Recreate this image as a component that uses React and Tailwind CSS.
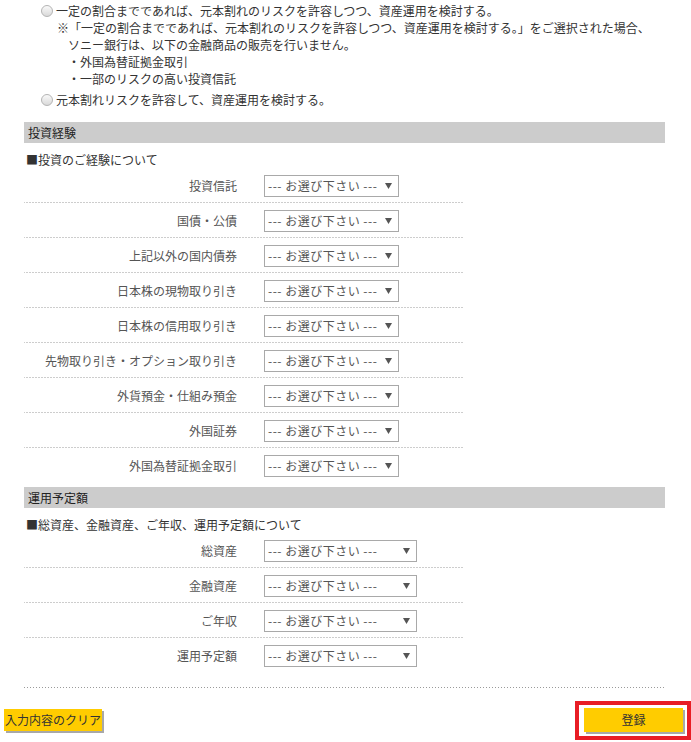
import React from "react";

const FONT = "font-['Noto_Sans_CJK_JP','Noto_Sans',sans-serif]";

const experienceRows = [
  "投資信託",
  "国債・公債",
  "上記以外の国内債券",
  "日本株の現物取り引き",
  "日本株の信用取り引き",
  "先物取り引き・オプション取り引き",
  "外貨預金・仕組み預金",
  "外国証券",
  "外国為替証拠金取引",
];

const amountRows = ["総資産", "金融資産", "ご年収", "運用予定額"];

const Radio = () => (
  <span className="mt-[3px] inline-block h-[12px] w-[12px] shrink-0 rounded-full border border-[#b4b4b4] bg-gradient-to-b from-[#fafafa] to-[#d9d9d9]" />
);

const Arrow = () => (
  <svg width="7" height="6" viewBox="0 0 7 6" className="shrink-0">
    <path d="M0 0 H7 L3.5 6 Z" fill="#555" />
  </svg>
);

const Select = ({ wide }) => (
  <div
    className={
      "flex h-[22px] items-center justify-between border border-[#a9a9a9] bg-white pl-[3px] pr-[6px] text-[12px] leading-[20px] text-[#555] " +
      (wide ? "w-[153px]" : "w-[135px]")
    }
  >
    <span className="tracking-[0.5px]">--- お選び下さい ---</span>
    <Arrow />
  </div>
);

const Row = ({ label, wide, last }) => (
  <div
    className={
      "flex h-[35px] w-[440px] items-center " +
      (last
        ? ""
        : "bg-[linear-gradient(to_right,#9a9a9a_1px,transparent_1px)] bg-[length:3px_1px] bg-bottom bg-repeat-x")
    }
  >
    <div className="w-[213px] text-right text-[12px] leading-[17px] text-[#555]">{label}</div>
    <div className="ml-[27px]">
      <Select wide={wide} />
    </div>
  </div>
);

const SectionHeader = ({ children }) => (
  <div className="h-[21px] bg-[#cccccc] pl-[4px] text-[12px] leading-[21px] text-[#222]">{children}</div>
);

export default function App() {
  return (
    <div className={`${FONT} h-[742px] w-[691px] overflow-hidden bg-white text-[12px] leading-[17px] text-[#333]`}>
      {/* risk choices */}
      <div className="pt-[2px]">
        <div className="flex gap-[3px] pl-[41px]">
          <Radio />
          <span>一定の割合までであれば、元本割れのリスクを許容しつつ、資産運用を検討する。</span>
        </div>
        <div className="pl-[57px]">
          ※「一定の割合までであれば、元本割れのリスクを許容しつつ、資産運用を検討する。」をご選択された場合、
        </div>
        <div className="pl-[68px]">ソニー銀行は、以下の金融商品の販売を行いません。</div>
        <div className="pl-[68px]">・外国為替証拠金取引</div>
        <div className="pl-[68px]">・一部のリスクの高い投資信託</div>
        <div className="mt-[4px] flex gap-[3px] pl-[41px]">
          <Radio />
          <span>元本割れリスクを許容して、資産運用を検討する。</span>
        </div>
      </div>

      <div className="ml-[24px] mt-[14px] w-[641px]">
        <SectionHeader>投資経験</SectionHeader>
        <div className="mt-[8px] pl-[2px]">■投資のご経験について</div>
        <div>
          {experienceRows.map((label, i) => (
            <Row key={label} label={label} last={i === experienceRows.length - 1} />
          ))}
        </div>

        <div className="mt-[4px]">
          <SectionHeader>運用予定額</SectionHeader>
        </div>
        <div className="mt-[8px] pl-[2px]">■総資産、金融資産、ご年収、運用予定額について</div>
        <div>
          {amountRows.map((label, i) => (
            <Row key={label} label={label} wide last={i === amountRows.length - 1} />
          ))}
        </div>
        <div className="mt-[14px] h-px w-[640px] bg-[linear-gradient(to_right,#9a9a9a_1px,transparent_1px)] bg-[length:3px_1px] bg-repeat-x" />
      </div>

      {/* buttons */}
      <div className="mt-[13px] flex items-start pl-[4px]">
        <button className="mt-[8px] h-[22px] w-[98px] bg-[#ffcc00] text-[12px] leading-[22px] text-[#333] shadow-[2px_2px_0_#a8a8a8]">
          入力内容のクリア
        </button>
        <div className="ml-auto h-[39px] w-[116px] border-4 border-[#e81d25] pl-[5px] pt-[3px]">
          <button className="h-[24px] w-[99px] bg-[#ffcc00] text-[12px] leading-[24px] text-[#333] shadow-[2px_2px_0_#a8a8a8]">
            登録
          </button>
        </div>
      </div>
    </div>
  );
}
